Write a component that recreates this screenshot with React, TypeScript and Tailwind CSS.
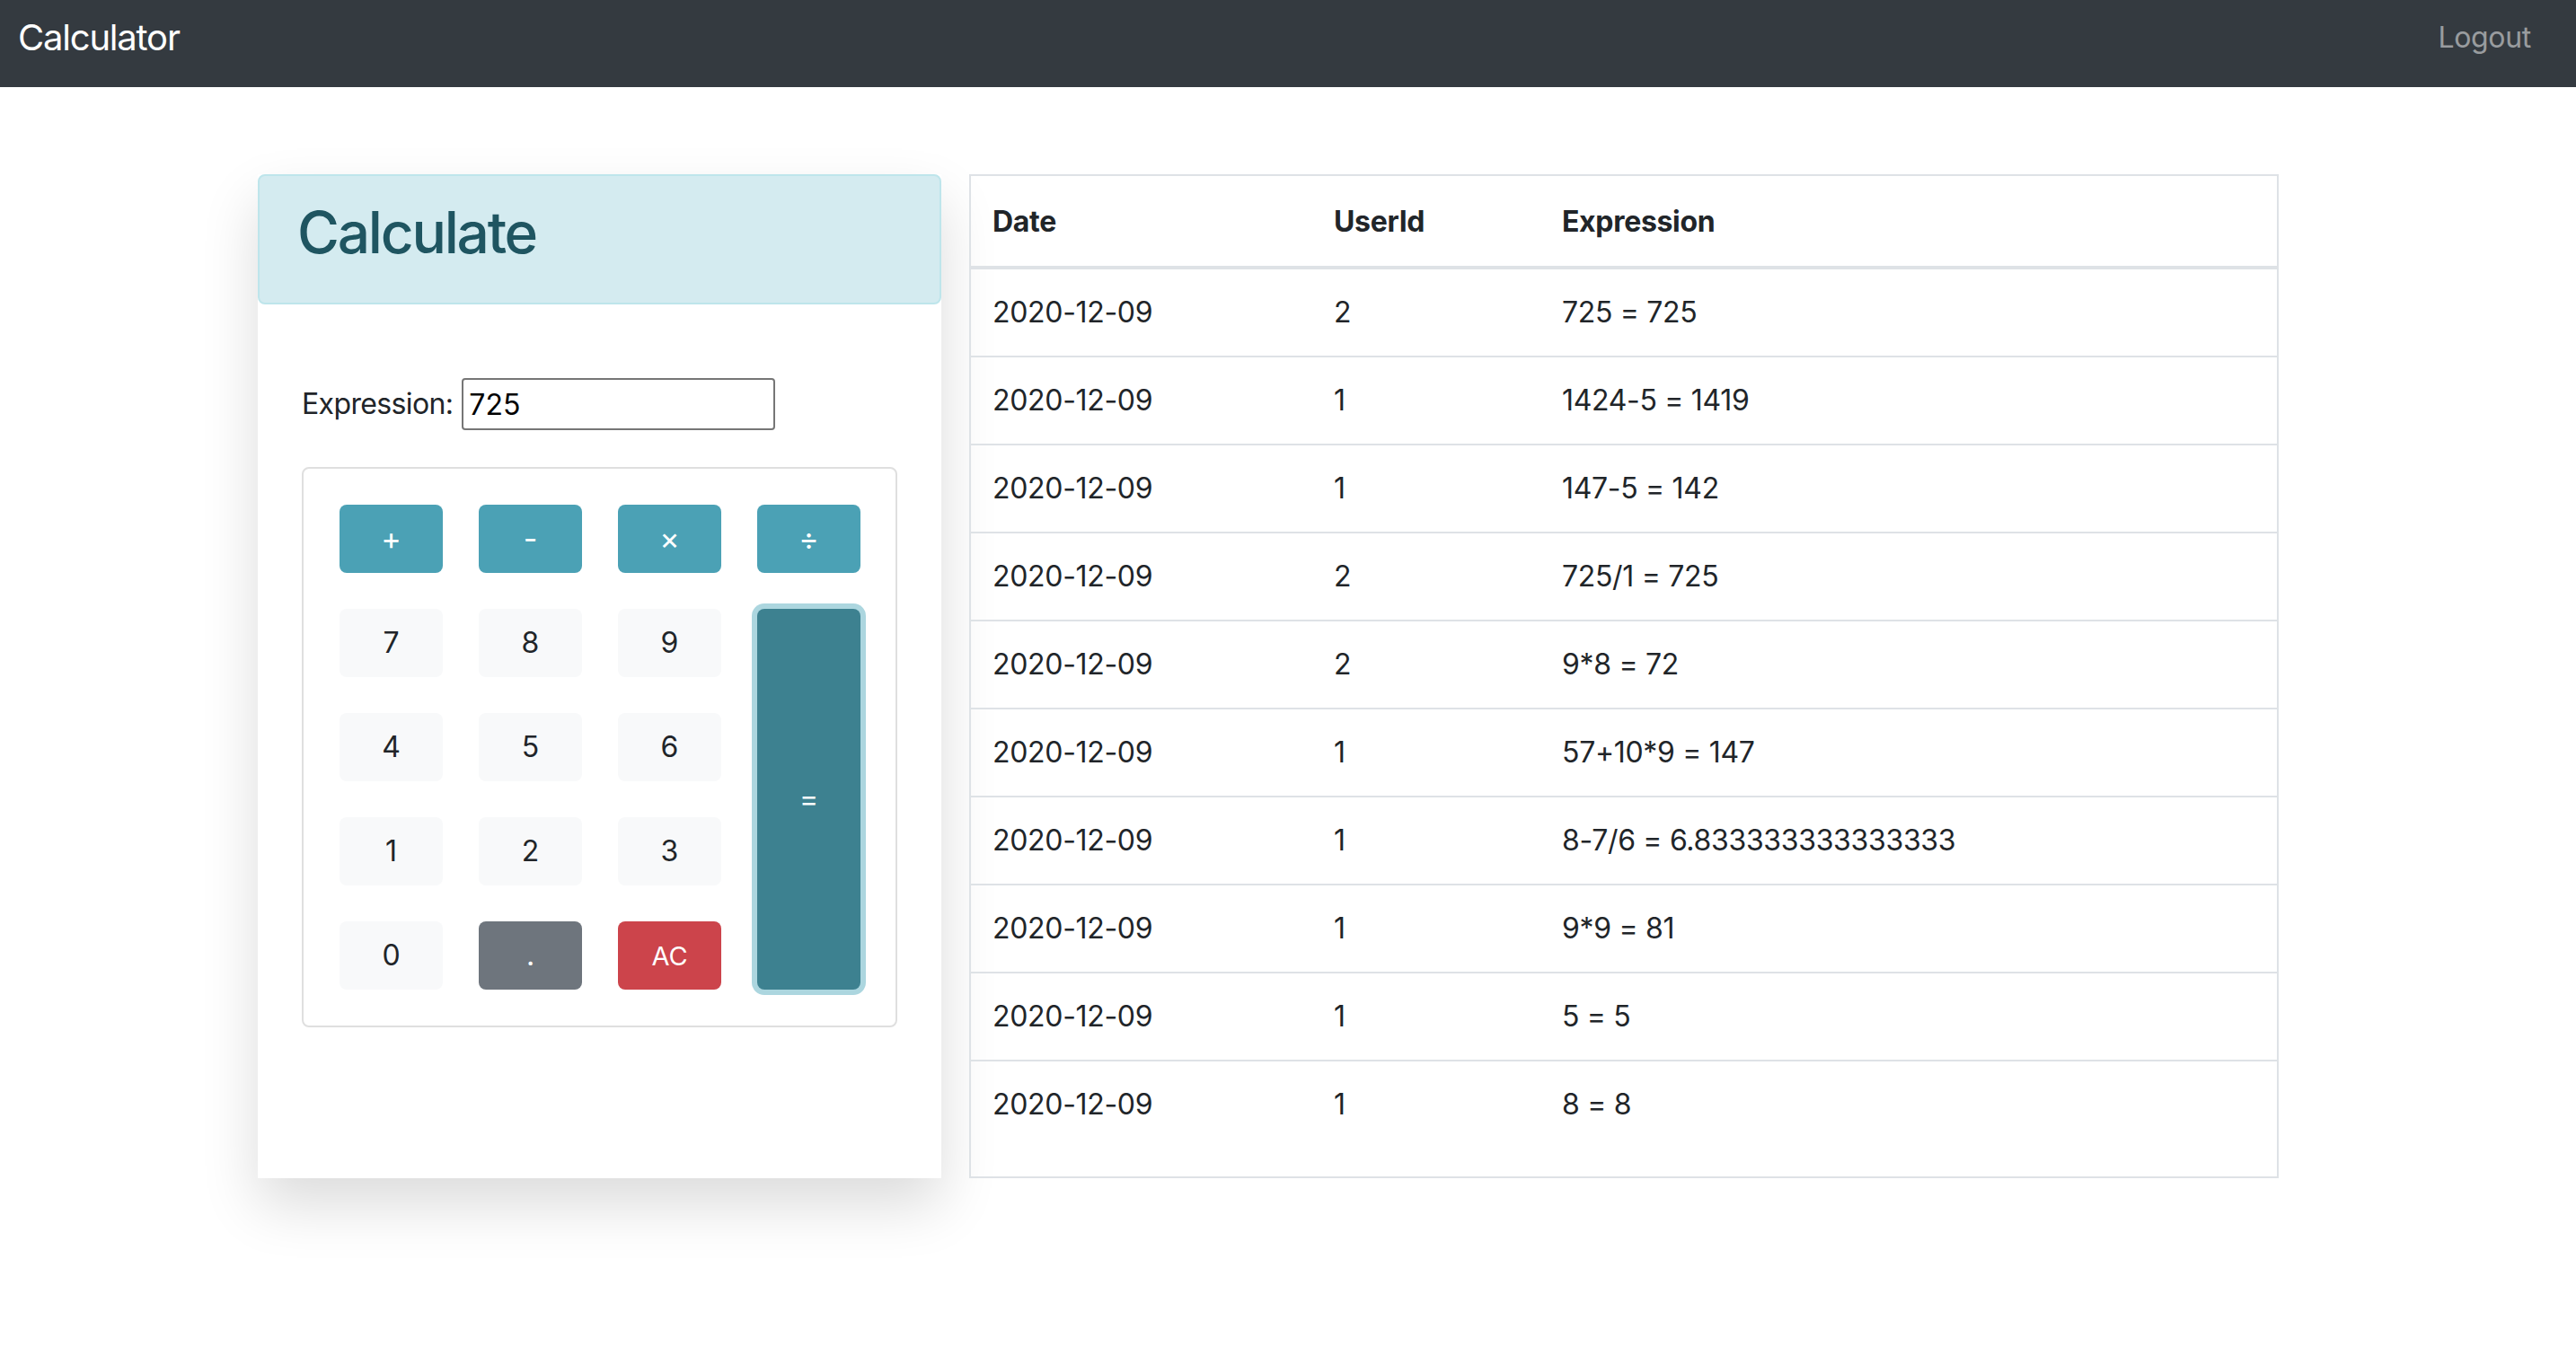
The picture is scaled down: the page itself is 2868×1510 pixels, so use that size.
import React from "react";

type Row = { date: string; userId: string; expression: string };

const history: Row[] = [
  { date: "2020-12-09", userId: "2", expression: "725 = 725" },
  { date: "2020-12-09", userId: "1", expression: "1424-5 = 1419" },
  { date: "2020-12-09", userId: "1", expression: "147-5 = 142" },
  { date: "2020-12-09", userId: "2", expression: "725/1 = 725" },
  { date: "2020-12-09", userId: "2", expression: "9*8 = 72" },
  { date: "2020-12-09", userId: "1", expression: "57+10*9 = 147" },
  { date: "2020-12-09", userId: "1", expression: "8-7/6 = 6.833333333333333" },
  { date: "2020-12-09", userId: "1", expression: "9*9 = 81" },
  { date: "2020-12-09", userId: "1", expression: "5 = 5" },
  { date: "2020-12-09", userId: "1", expression: "8 = 8" },
];

const opBtn = "h-[76px] rounded-[8px] bg-[#4ba1b5] text-white text-[34px] leading-none";
const numBtn = "h-[76px] rounded-[8px] bg-[#f8f9fa] text-[#212529] text-[32px] leading-none";

function Keypad() {
  return (
    <div className="mt-[41px] rounded-[8px] border-2 border-[#dfdfdf] p-[40px]">
      <div className="grid grid-cols-[repeat(4,115px)] grid-rows-[repeat(5,76px)] gap-x-[40px] gap-y-[40px]">
        <button className={opBtn}>+</button>
        <button className={opBtn}>-</button>
        <button className={opBtn}>×</button>
        <button className={opBtn}>÷</button>
        <button className={numBtn}>7</button>
        <button className={numBtn}>8</button>
        <button className={numBtn}>9</button>
        <button className="row-span-4 rounded-[8px] bg-[#3d8190] text-white text-[32px] leading-none ring-[6px] ring-[#acd6df]">
          =
        </button>
        <button className={numBtn}>4</button>
        <button className={numBtn}>5</button>
        <button className={numBtn}>6</button>
        <button className={numBtn}>1</button>
        <button className={numBtn}>2</button>
        <button className={numBtn}>3</button>
        <button className={numBtn}>0</button>
        <button className="h-[76px] rounded-[8px] bg-[#6e757d] text-white text-[32px] leading-none">.</button>
        <button className="h-[76px] rounded-[8px] bg-[#cc444b] text-white text-[29px] leading-none">AC</button>
      </div>
    </div>
  );
}

export default function App() {
  return (
    <div className="min-h-screen bg-white font-['Inter','Liberation_Sans',sans-serif] text-[#212529]">
      <nav className="flex h-[97px] items-center justify-between bg-[#343a40] pb-[14px] pl-[20px] pr-[50px]">
        <span className="text-[40px] tracking-[-0.03em] text-white">Calculator</span>
        <span className="text-[32px] tracking-[-0.01em] text-white/50">Logout</span>
      </nav>

      <div className="flex gap-[31px] pl-[287px] pt-[97px]">
        <div className="flex w-[761px] flex-col bg-white shadow-[0_30px_60px_rgba(0,0,0,0.14)]">
          <div className="rounded-[8px] border-2 border-[#bee5eb] bg-[#d4ebf0] px-[42px] pb-[40px] pt-[24px]">
            <h2 className="text-[64px] font-medium leading-[77px] tracking-[-0.035em] text-[#1f5561]">Calculate</h2>
          </div>
          <div className="px-[49px] pb-[168px] pt-[82px]">
            <div className="flex items-center">
              <label className="text-[32px] tracking-[-0.02em]">Expression:</label>
              <input
                className="ml-[10px] h-[58px] w-[349px] rounded-[4px] border-2 border-[#767676] px-[6px] text-[32px] text-black outline-none"
                defaultValue="725"
              />
            </div>
            <Keypad />
          </div>
        </div>

        <div className="w-[1458px] border-2 border-[#dee2e6]">
          <table className="w-full table-fixed border-collapse text-[32px] tracking-[-0.01em]">
            <thead>
              <tr className="border-b-4 border-[#dee2e6]">
                <th className="w-[380px] px-[24px] pb-[25px] pt-[27px] text-left font-bold leading-[48px]">Date</th>
                <th className="w-[254px] px-[24px] pb-[25px] pt-[27px] text-left font-bold leading-[48px]">UserId</th>
                <th className="px-[24px] pb-[25px] pt-[27px] text-left font-bold leading-[48px]">Expression</th>
              </tr>
            </thead>
            <tbody>
              {history.map((r, i) => (
                <tr key={i} className={i > 0 ? "border-t-2 border-[#dee2e6]" : ""}>
                  <td className="px-[24px] py-[24px] leading-[48px]">{r.date}</td>
                  <td className="px-[24px] py-[24px] leading-[48px]">{r.userId}</td>
                  <td className="px-[24px] py-[24px] leading-[48px]">{r.expression}</td>
                </tr>
              ))}
            </tbody>
          </table>
        </div>
      </div>
    </div>
  );
}
